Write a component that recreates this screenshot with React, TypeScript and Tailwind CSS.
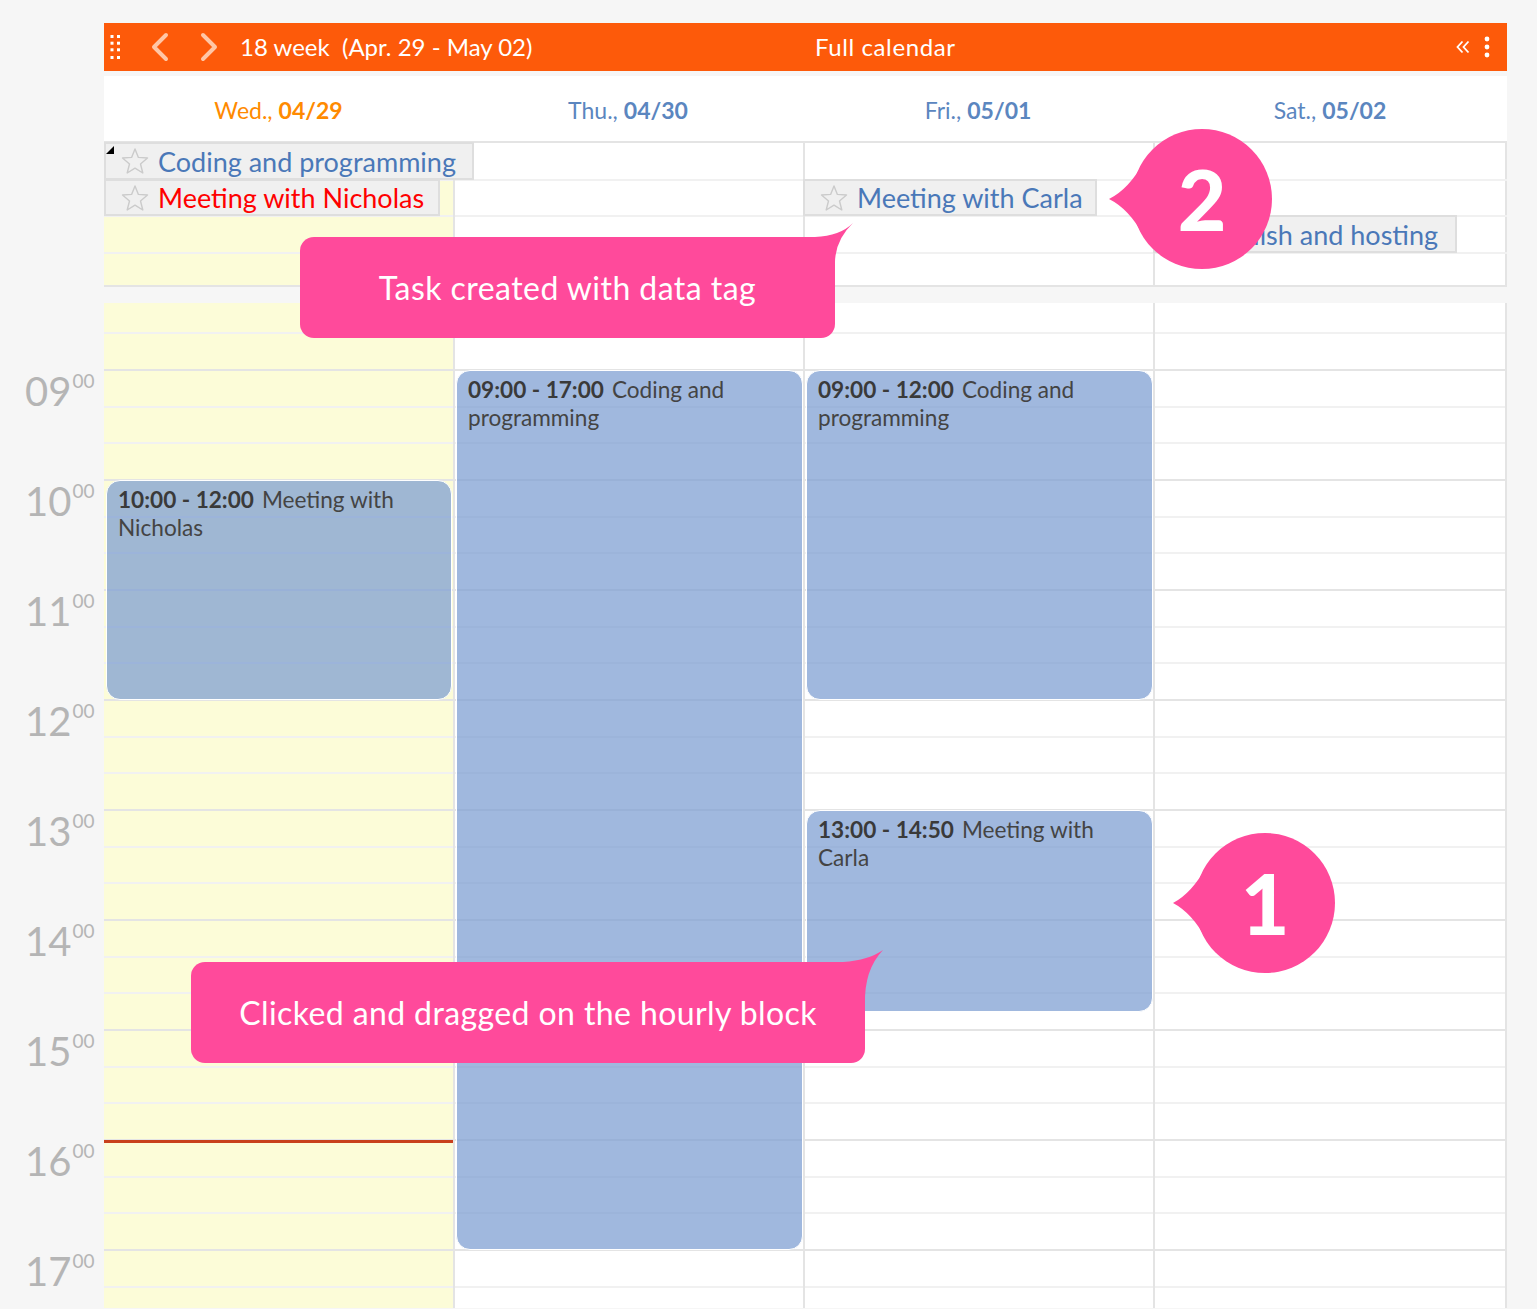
import React from 'react'

const HOURS = [8, 9, 10, 11, 12, 13, 14, 15, 16, 17]
const HOUR_PX = 110
// grid top (y=304) sits 44px below the 08:00 line
const OFFSET = 44

type Ev = { col: number; start: number; end: number; time: string; title: string }

const EVENTS: Ev[] = [
  { col: 0, start: 10, end: 12, time: '10:00 - 12:00', title: 'Meeting with Nicholas' },
  { col: 1, start: 9, end: 17, time: '09:00 - 17:00', title: 'Coding and programming' },
  { col: 2, start: 9, end: 12, time: '09:00 - 12:00', title: 'Coding and programming' },
  { col: 2, start: 13, end: 14 + 50 / 60, time: '13:00 - 14:50', title: 'Meeting with Carla' },
]

const DAYS = [
  { name: 'Wed.,', date: '04/29', today: true },
  { name: 'Thu.,', date: '04/30' },
  { name: 'Fri.,', date: '05/01' },
  { name: 'Sat.,', date: '05/02' },
]

const COLS = 'grid grid-cols-[349px_350px_350px_354px]'

const Star = () => (
  <svg width="28" height="28" viewBox="0 0 28 28" className="shrink-0">
    <polygon
      points="14,2 17.4,10.4 26.5,11 19.5,17 21.8,26 14,21.2 6.2,26 8.5,17 1.5,11 10.6,10.4"
      fill="none"
      stroke="#cbcbcb"
      strokeWidth="1.4"
      strokeLinejoin="round"
    />
  </svg>
)

const Chip: React.FC<{ text: string; color: string; className: string }> = ({
  text,
  color,
  className,
}) => (
  <div
    className={`absolute flex items-center gap-[9px] border-2 border-[#dedede] bg-[#f0f0f0] pl-[15px] ${className}`}
  >
    <Star />
    <span className={`whitespace-nowrap text-[27px] leading-none ${color}`}>{text}</span>
  </div>
)

function HourRows() {
  return (
    <div className="mt-[-44px]">
      {HOURS.map((h) => (
        <div key={h} className="h-[110px]">
          <div className="h-[36.67px] border-t-2 border-[#e4e4e4]" />
          <div className="h-[36.67px] border-t-2 border-[#f1f1f1]" />
          <div className="h-[36.66px] border-t-2 border-[#f1f1f1]" />
        </div>
      ))}
    </div>
  )
}

export default function App() {
  return (
    <div className="relative h-[1309px] w-full overflow-hidden bg-[#f6f6f6] pt-[23px] font-[Lato,sans-serif]">
      {/* toolbar */}
      <div className="ml-[104px] grid h-[48px] w-[1403px] grid-cols-[711px_1fr_auto] items-center bg-[#fd5a0a] text-white">
        <div className="flex items-center">
          <svg width="11" height="24" viewBox="0 0 11 24" className="ml-[6px]">
            {[0, 6.7, 13.3, 21].map((y) => (
              <g key={y} fill="#fff">
                <rect x="0.5" y={y} width="3" height="3" />
                <rect x="7" y={y} width="3" height="3" />
              </g>
            ))}
          </svg>
          <svg width="20" height="30" viewBox="0 0 20 30" className="ml-[30px]">
            <path d="M15 3 L3 15 L15 27" fill="none" stroke="#ffc6a6" strokeWidth="4" strokeLinecap="round" strokeLinejoin="round" />
          </svg>
          <svg width="20" height="30" viewBox="0 0 20 30" className="ml-[28px]">
            <path d="M4 3 L16 15 L4 27" fill="none" stroke="#ffc6a6" strokeWidth="4" strokeLinecap="round" strokeLinejoin="round" />
          </svg>
          <span className="ml-[21px] whitespace-pre text-[24px] leading-none">18 week  (Apr. 29 - May 02)</span>
        </div>
        <span className="text-[24px] leading-none tracking-[0.6px]">Full calendar</span>
        <div className="flex items-center gap-[14px] pr-[17px]">
          <svg width="14" height="14" viewBox="0 0 14 14">
            <path d="M6.5 1.5 L1.5 7 L6.5 12.5 M12.5 1.5 L7.5 7 L12.5 12.5" fill="none" stroke="#fff" strokeWidth="1.8" />
          </svg>
          <svg width="6" height="22" viewBox="0 0 6 22">
            <circle cx="3" cy="3" r="2.4" fill="#fff" />
            <circle cx="3" cy="11" r="2.4" fill="#fff" />
            <circle cx="3" cy="19" r="2.4" fill="#fff" />
          </svg>
        </div>
      </div>

      {/* day headers */}
      <div className={`ml-[104px] mt-[5px] h-[65px] w-[1403px] bg-white ${COLS}`}>
        {DAYS.map((d) => (
          <div
            key={d.date}
            className={`flex items-center justify-center pt-[3px] text-[23px] ${d.today ? 'text-[#ff8a00]' : 'text-[#5b86bf]'}`}
          >
            <span>{d.name}</span>
            <span className="ml-[6px] font-bold">{d.date}</span>
          </div>
        ))}
      </div>

      {/* all-day area */}
      <div className="relative ml-[104px] w-[1403px] border-y-2 border-r-2 border-[#e4e4e4] bg-white">
        <div className={COLS}>
          {DAYS.map((d, i) => (
            <div
              key={d.date}
              className={`grid grid-rows-[36px_36px_37px_33px] ${i > 0 ? 'border-l-2 border-[#e4e4e4]' : ''} ${d.today ? 'bg-[#fcfcd8]' : ''}`}
            >
              <div />
              <div className="border-t-2 border-[#f1f1f1]" />
              <div className="border-t-2 border-[#f1f1f1]" />
              <div className="border-t-2 border-[#f1f1f1]" />
            </div>
          ))}
        </div>
        <Chip text="Coding and programming" color="text-[#4a78b8]" className="left-0 top-[-1px] h-[38px] w-[370px]" />
        <Chip text="Meeting with Nicholas" color="text-[#ff0000]" className="left-0 top-[36px] h-[37px] w-[336px]" />
        <Chip text="Meeting with Carla" color="text-[#4a78b8]" className="left-[699px] top-[36px] h-[37px] w-[294px]" />
        <Chip text="Publish and hosting" color="text-[#4a78b8]" className="left-[1049px] top-[72px] h-[38px] w-[304px]" />
        <svg width="8" height="8" viewBox="0 0 8 8" className="absolute left-[2px] top-[3px]">
          <polygon points="8,0 8,8 0,8" fill="#000" />
        </svg>
      </div>

      {/* time grid */}
      <div className="mt-[16px] flex h-[1005px]">
        <div className="w-[104px] overflow-hidden">
          <div className="mt-[-44px]">
            {HOURS.map((h) => (
              <div key={h} className="h-[110px] pl-[25px] pt-[2px] text-[#b5b5b5]">
                {h > 8 && (
                  <>
                    <span className="text-[40px] leading-none">{String(h).padStart(2, '0')}</span>
                    <span className="relative top-[-18px] ml-[1px] text-[19px] leading-none">00</span>
                  </>
                )}
              </div>
            ))}
          </div>
        </div>
        <div className={`w-[1403px] overflow-hidden border-r-2 border-[#e4e4e4] bg-white ${COLS}`}>
          {DAYS.map((d, i) => (
            <div
              key={d.date}
              className={`relative ${i > 0 ? 'border-l-2 border-[#e4e4e4]' : ''} ${d.today ? 'bg-[#fcfcd8]' : ''}`}
            >
              <HourRows />
              {EVENTS.filter((e) => e.col === i).map((e) => (
                <div
                  key={e.time + e.col}
                  className={`absolute rounded-[14px] border border-white bg-[rgba(123,156,209,0.72)] px-[11px] pt-[5px] text-[22.6px] leading-[28px] text-[#444] ${i === 0 ? 'left-[2px] right-[1px]' : 'left-[1px] right-0'}`}
                  style={{
                    top: (e.start - 8) * HOUR_PX - OFFSET + 1,
                    height: (e.end - e.start) * HOUR_PX,
                  }}
                >
                  <span className="mr-[8px] font-bold text-[#3a3a3a]">{e.time}</span>
                  {e.title}
                </div>
              ))}
              {d.today && <div className="absolute left-0 right-[-2px] top-[837px] h-[3px] bg-[#c8401c]" />}
            </div>
          ))}
        </div>
      </div>

      {/* callouts */}
      <div className="absolute left-[300px] top-[237px] flex h-[101px] w-[535px] items-center justify-center rounded-[14px] bg-[#ff4a9b] text-[32px] tracking-[0.45px] text-white">
        <svg width="50" height="60" viewBox="0 0 50 60" className="absolute left-[510px] top-[-16px]">
          <path d="M5 16 Q30 15 43 2 Q24 20 25 45 L5 45 Z" fill="#ff4a9b" />
        </svg>
        <span className="relative">Task created with data tag</span>
      </div>

      <div className="absolute left-[191px] top-[962px] flex h-[101px] w-[674px] items-center justify-center rounded-[14px] bg-[#ff4a9b] text-[32px] tracking-[0.4px] text-white">
        <svg width="60" height="70" viewBox="0 0 60 70" className="absolute left-[640px] top-[-16px]">
          <path d="M12 16 Q38 14 52 4 Q33 24 34 58 L12 58 Z" fill="#ff4a9b" />
        </svg>
        <span className="relative">Clicked and dragged on the hourly block</span>
      </div>

      <div className="absolute left-[1105px] top-[127px] h-[144px] w-[170px]">
        <svg width="170" height="144" viewBox="0 0 170 144" className="absolute inset-0">
          <circle cx="97" cy="72" r="70" fill="#ff4a9b" />
          <path d="M38 36 Q24 62 4 72 Q24 82 38 108 Z" fill="#ff4a9b" />
        </svg>
        <div className="absolute left-[27px] top-[2px] flex h-[140px] w-[140px] items-center justify-center text-[84px] font-black leading-none text-white">
          2
        </div>
      </div>

      <div className="absolute left-[1170px] top-[832px] h-[143px] w-[167px]">
        <svg width="167" height="143" viewBox="0 0 167 143" className="absolute inset-0">
          <circle cx="95" cy="71" r="70" fill="#ff4a9b" />
          <path d="M36 35 Q22 61 3 71 Q22 81 36 107 Z" fill="#ff4a9b" />
        </svg>
        <div className="absolute left-[25px] top-[1px] flex h-[140px] w-[140px] items-center justify-center text-[84px] font-black leading-none text-white">
          1
        </div>
      </div>
    </div>
  )
}
